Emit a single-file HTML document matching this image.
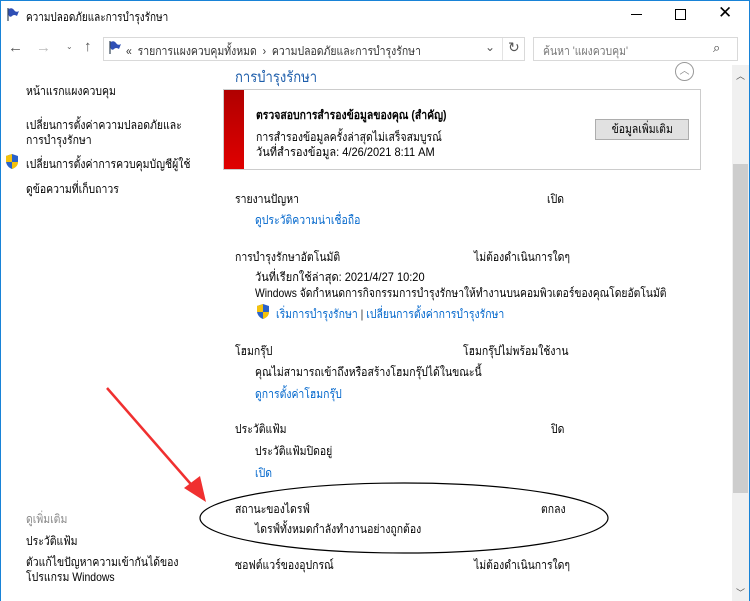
<!DOCTYPE html>
<html><head><meta charset="utf-8"><style>
*{margin:0;padding:0;box-sizing:border-box}
body{width:750px;height:601px;overflow:hidden;background:#fff;font-family:"Liberation Sans","Noto Sans CJK SC",sans-serif;font-size:12px;color:#000;position:relative}
.a{position:absolute;white-space:nowrap}
.t{transform:scaleX(.87);transform-origin:0 0}
.l{color:#0066cc}
.g{color:#888}
</style></head><body>
<div class="a" style="left:0;top:0;width:750px;height:1px;background:#1883d7"></div>
<div class="a" style="left:749px;top:0;width:1px;height:601px;background:#1883d7"></div>
<div class="a" style="left:0;top:0;width:1px;height:601px;background:#1883d7"></div>
<!-- title -->
<svg class="a" style="left:6px;top:7px" width="14" height="14" viewBox="0 0 14 14"><path d="M2 1v13" stroke="#345" stroke-width="1.2"/><path d="M2.5 2 Q6 0 8 3 T13 4 L11 9 Q8 7 6 9 T2.5 8Z" fill="#2f4fb5"/></svg>
<div class="a t" style="left:26px;top:8px;transform:scaleX(.83)">ความปลอดภัยและการบำรุงรักษา</div>
<div class="a" style="left:631px;top:14px;width:11px;height:1px;background:#000"></div>
<div class="a" style="left:675px;top:9px;width:11px;height:11px;border:1px solid #000"></div>
<div class="a" style="left:718px;top:3px;font-size:17px;font-weight:300">✕</div>
<!-- nav -->
<div class="a" style="left:8px;top:39px;font-size:15px;color:#555">←</div>
<div class="a" style="left:36px;top:39px;font-size:15px;color:#bbb">→</div>
<div class="a" style="left:66px;top:42px;font-size:8px;color:#666">⌄</div>
<div class="a" style="left:84px;top:38px;font-size:15px;color:#555">↑</div>
<div class="a" style="left:103px;top:37px;width:422px;height:24px;border:1px solid #d9d9d9"></div>
<svg class="a" style="left:108px;top:40px" width="14" height="14" viewBox="0 0 14 14"><path d="M2 1v13" stroke="#345" stroke-width="1.2"/><path d="M2.5 2 Q6 0 8 3 T13 4 L11 9 Q8 7 6 9 T2.5 8Z" fill="#2f4fb5"/></svg>
<div class="a t" style="left:126px;top:42px;color:#333">«&nbsp; รายการแผงควบคุมทั้งหมด &nbsp;›&nbsp; ความปลอดภัยและการบำรุงรักษา</div>
<div class="a" style="left:485px;top:40px;color:#555">⌄</div>
<div class="a" style="left:502px;top:38px;width:1px;height:22px;background:#e3e3e3"></div>
<div class="a" style="left:508px;top:39px;font-size:14px;color:#555">↻</div>
<div class="a" style="left:533px;top:37px;width:205px;height:24px;border:1px solid #d9d9d9"></div>
<div class="a t" style="left:543px;top:42px;color:#777">ค้นหา 'แผงควบคุม'</div>
<div class="a" style="left:713px;top:40px;font-size:13px;color:#444">⌕</div>
<!-- left pane -->
<div class="a t" style="left:26px;top:82px">หน้าแรกแผงควบคุม</div>
<div class="a t" style="left:26px;top:118px;line-height:15px">เปลี่ยนการตั้งค่าความปลอดภัยและ<br>การบำรุงรักษา</div>
<svg class="a" style="left:4px;top:153px" width="16" height="17" viewBox="0 0 16 17"><path d="M8 1L2 3v5c0 4 3 7 6 8 3-1 6-4 6-8V3z" fill="#2a62c9"/><path d="M8 1v8H2V3zM8 9h6c0 4-3 6-6 7z" fill="#f4c20d"/></svg>
<div class="a t" style="left:26px;top:155px">เปลี่ยนการตั้งค่าการควบคุมบัญชีผู้ใช้</div>
<div class="a t" style="left:26px;top:180px">ดูข้อความที่เก็บถาวร</div>
<div class="a t g" style="left:26px;top:510px">ดูเพิ่มเติม</div>
<div class="a t" style="left:26px;top:532px">ประวัติแฟ้ม</div>
<div class="a t" style="left:26px;top:555px;line-height:15px">ตัวแก้ไขปัญหาความเข้ากันได้ของ<br>โปรแกรม Windows</div>
<!-- main -->
<div class="a t" style="left:235px;top:65px;font-size:15px;color:#1e5eab">การบำรุงรักษา</div>
<div class="a" style="left:675px;top:62px;width:19px;height:19px;border:1px solid #999;border-radius:50%;font-size:10px;color:#888;text-align:center;line-height:18px">︿</div>
<div class="a" style="left:223px;top:89px;width:478px;height:81px;border:1px solid #ccc"></div>
<div class="a" style="left:224px;top:90px;width:20px;height:79px;background:linear-gradient(#b00000,#e00000)"></div>
<div class="a t" style="left:256px;top:106px;font-weight:bold">ตรวจสอบการสำรองข้อมูลของคุณ (สำคัญ)</div>
<div class="a t" style="left:256px;top:128px">การสำรองข้อมูลครั้งล่าสุดไม่เสร็จสมบูรณ์</div>
<div class="a t" style="left:256px;top:143px;transform:scaleX(.92)">วันที่สำรองข้อมูล: 4/26/2021 8:11 AM</div>
<div class="a" style="left:595px;top:119px;width:94px;height:21px;background:#e1e1e1;border:1px solid #adadad;text-align:center;line-height:19px"><span style="display:inline-block;transform:scaleX(.87)">ข้อมูลเพิ่มเติม</span></div>

<div class="a t" style="left:235px;top:190px">รายงานปัญหา</div>
<div class="a t" style="left:547px;top:190px">เปิด</div>
<div class="a t l" style="left:255px;top:211px">ดูประวัติความน่าเชื่อถือ</div>

<div class="a t" style="left:235px;top:248px">การบำรุงรักษาอัตโนมัติ</div>
<div class="a t" style="left:474px;top:248px">ไม่ต้องดำเนินการใดๆ</div>
<div class="a t" style="left:255px;top:268px;transform:scaleX(.92)">วันที่เรียกใช้ล่าสุด: 2021/4/27 10:20</div>
<div class="a t" style="left:255px;top:284px;transform:scaleX(.86)">Windows จัดกำหนดการกิจกรรมการบำรุงรักษาให้ทำงานบนคอมพิวเตอร์ของคุณโดยอัตโนมัติ</div>
<svg class="a" style="left:255px;top:303px" width="16" height="17" viewBox="0 0 16 17"><path d="M8 1L2 3v5c0 4 3 7 6 8 3-1 6-4 6-8V3z" fill="#2a62c9"/><path d="M8 1v8H2V3zM8 9h6c0 4-3 6-6 7z" fill="#f4c20d"/></svg>
<div class="a t" style="left:276px;top:305px"><span class="l">เริ่มการบำรุงรักษา</span> <span style="color:#333">|</span> <span class="l">เปลี่ยนการตั้งค่าการบำรุงรักษา</span></div>

<div class="a t" style="left:235px;top:342px">โฮมกรุ๊ป</div>
<div class="a t" style="left:463px;top:342px">โฮมกรุ๊ปไม่พร้อมใช้งาน</div>
<div class="a t" style="left:255px;top:363px">คุณไม่สามารถเข้าถึงหรือสร้างโฮมกรุ๊ปได้ในขณะนี้</div>
<div class="a t l" style="left:255px;top:385px">ดูการตั้งค่าโฮมกรุ๊ป</div>

<div class="a t" style="left:235px;top:420px">ประวัติแฟ้ม</div>
<div class="a t" style="left:551px;top:420px">ปิด</div>
<div class="a t" style="left:255px;top:442px">ประวัติแฟ้มปิดอยู่</div>
<div class="a t l" style="left:255px;top:464px">เปิด</div>

<div class="a t" style="left:235px;top:500px">สถานะของไดรฟ์</div>
<div class="a t" style="left:541px;top:500px">ตกลง</div>
<div class="a t" style="left:255px;top:520px">ไดรฟ์ทั้งหมดกำลังทำงานอย่างถูกต้อง</div>

<div class="a t" style="left:235px;top:556px">ซอฟต์แวร์ของอุปกรณ์</div>
<div class="a t" style="left:474px;top:556px">ไม่ต้องดำเนินการใดๆ</div>

<!-- scrollbar -->
<div class="a" style="left:732px;top:65px;width:17px;height:536px;background:#f0f0f0"></div>
<div class="a" style="left:733px;top:164px;width:15px;height:329px;background:#cdcdcd"></div>
<div class="a" style="left:736px;top:69px;font-size:9px;color:#555">︿</div>
<div class="a" style="left:736px;top:586px;font-size:9px;color:#555">﹀</div>

<!-- annotations -->
<svg class="a" style="left:0;top:0" width="750" height="601">
<ellipse cx="404" cy="518" rx="204" ry="35" fill="none" stroke="#000" stroke-width="1.2"/>
<line x1="107" y1="388" x2="196" y2="490" stroke="#f03030" stroke-width="2.5"/>
<polygon points="206,502 184,488 200,476" fill="#f03030"/>
</svg>
</body></html>
